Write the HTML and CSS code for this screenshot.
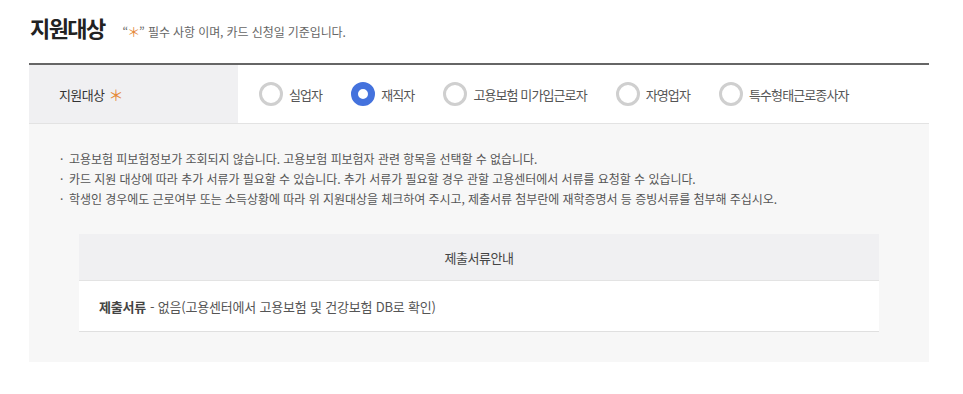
FILE: index.html
```html
<!DOCTYPE html>
<html lang="ko">
<head>
  <meta charset="UTF-8" />
  <meta name="viewport" content="width=device-width, initial-scale=1.0">
  <title>지원대상</title>
  <link rel="stylesheet" href="styles.css">
</head>
<body>
  <div class="page">
    <div class="heading">
      <h2 class="title">지원대상</h2>
      <p class="subtitle">“<span class="star">＊</span>” 필수 사항 이며, 카드 신청일 기준입니다.</p>
    </div>

    <div class="form-row">
      <div class="form-label">지원대상 <span class="star">＊</span></div>
      <div class="options">
        <label class="option"><span class="radio"></span>실업자</label>
        <label class="option"><span class="radio checked"></span>재직자</label>
        <label class="option"><span class="radio"></span>고용보험 미가입근로자</label>
        <label class="option"><span class="radio"></span>자영업자</label>
        <label class="option"><span class="radio"></span>특수형태근로종사자</label>
      </div>
    </div>

    <div class="info-box">
      <ul class="notes">
        <li>고용보험 피보험정보가 조회되지 않습니다. 고용보험 피보험자 관련 항목을 선택할 수 없습니다.</li>
        <li>카드 지원 대상에 따라 추가 서류가 필요할 수 있습니다. 추가 서류가 필요할 경우 관할 고용센터에서 서류를 요청할 수 있습니다.</li>
        <li>학생인 경우에도 근로여부 또는 소득상황에 따라 위 지원대상을 체크하여 주시고, 제출서류 첨부란에 재학증명서 등 증빙서류를 첨부해 주십시오.</li>
      </ul>

      <div class="doc-table">
        <div class="doc-head">제출서류안내</div>
        <div class="doc-body"><strong>제출서류</strong> - 없음(고용센터에서 고용보험 및 건강보험 DB로 확인)</div>
      </div>
    </div>
  </div>
</body>
</html>
```

FILE: styles.css
```css
* {
  margin: 0;
  padding: 0;
  box-sizing: border-box;
}

body {
  font-family: 'Noto Sans CJK KR', 'Noto Sans', sans-serif;
  color: #555;
  background: #fff;
}

.page {
  width: 900px;
  margin-left: 29px;
}

.heading {
  display: flex;
  align-items: baseline;
  padding: 10px 0 0 1px;
  height: 63px;
}

.title {
  font-size: 22px;
  font-weight: 700;
  color: #222;
  letter-spacing: -1.6px;
  line-height: 34px;
}

.subtitle {
  margin-left: 18px;
  font-size: 12px;
  color: #666;
  letter-spacing: -0.1px;
}

.star {
  color: #e58a3a;
  font-weight: 400;
}

.subtitle .star {
  font-size: 13px;
  margin: 0 -1px;
}

.form-row {
  display: flex;
  height: 61px;
  border-top: 2px solid #666;
  border-bottom: 1px solid #e3e3e3;
}

.form-label {
  width: 209px;
  display: flex;
  align-items: center;
  gap: 4px;
  padding-left: 30px;
  background: #f0f0f2;
  font-size: 13px;
  color: #333;
  letter-spacing: -0.6px;
}

.form-label .star {
  font-size: 15px;
}

.options {
  display: flex;
  align-items: center;
  gap: 29px;
  padding-left: 21px;
}

.option {
  display: flex;
  align-items: center;
  gap: 6px;
  font-size: 13px;
  color: #555;
  letter-spacing: -0.9px;
}

.radio {
  width: 24px;
  height: 24px;
  border: 3px solid #cfcfcf;
  border-radius: 50%;
  background: #fff;
}

.radio.checked {
  border: 7px solid #4472dd;
}

.info-box {
  background: #f7f7f7;
  padding: 25px 30px 30px;
}

.notes {
  list-style: none;
  padding-left: 10px;
  font-size: 12px;
  line-height: 20px;
  color: #555;
  letter-spacing: -0.05px;
}

.notes li {
  display: flex;
}

.notes li::before {
  content: '·';
  width: 9px;
  margin-left: -9px;
}

.doc-table {
  margin: 25px 20px 0;
  background: #fff;
}

.doc-head {
  height: 47px;
  display: flex;
  align-items: center;
  justify-content: center;
  background: #f0f0f2;
  border-bottom: 1px solid #e3e3e3;
  font-size: 13px;
  color: #444;
  letter-spacing: -0.5px;
}

.doc-body {
  height: 51px;
  display: flex;
  align-items: center;
  gap: 4px;
  padding-left: 20px;
  border-bottom: 1px solid #e0e0e0;
  font-size: 13px;
  color: #555;
  letter-spacing: -0.2px;
}

.doc-body strong {
  color: #444;
}
```
